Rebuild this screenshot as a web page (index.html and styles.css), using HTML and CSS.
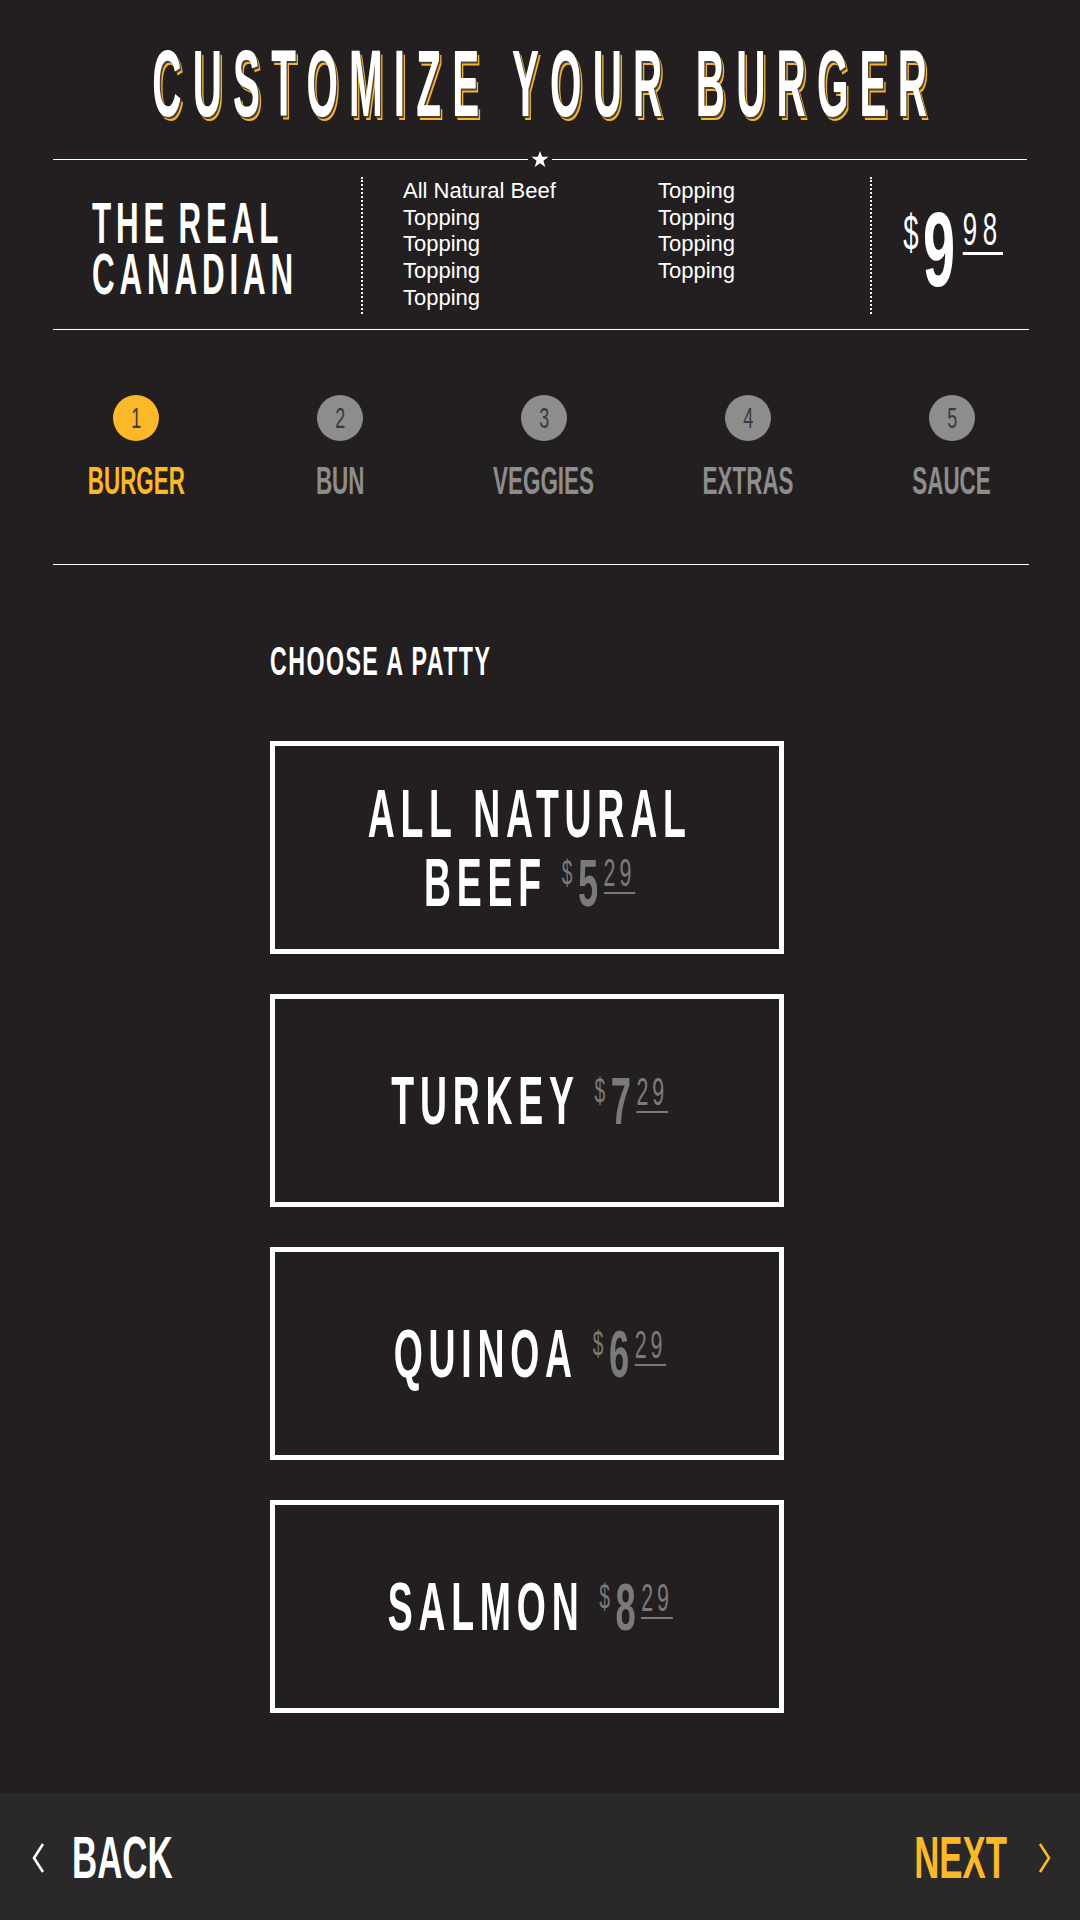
FILE: index.html
```html
<!DOCTYPE html>
<html lang="en">
<head>
    <meta charset="UTF-8">
    <title>Customize Your Burger</title>
    <link rel="stylesheet" href="styles.css">
</head>
<body>
    <header class="top">
        <h1 class="title"><span>CUSTOMIZE YOUR BURGER</span></h1>
        <div class="rule">
            <span class="rule-line"></span>
            <svg class="star" viewBox="0 0 20 20" width="18" height="18"><polygon points="10,1 12.4,7.6 19.5,7.6 13.8,11.9 15.9,18.8 10,14.7 4.1,18.8 6.2,11.9 0.5,7.6 7.6,7.6" fill="#fff"/></svg>
            <span class="rule-line"></span>
        </div>
        <section class="summary">
            <div class="summary-name"><span>THE REAL</span><span>CANADIAN</span></div>
            <div class="summary-sep"></div>
            <ul class="toppings">
                <li>All Natural Beef</li>
                <li>Topping</li>
                <li>Topping</li>
                <li>Topping</li>
                <li>Topping</li>
                <li>Topping</li>
                <li>Topping</li>
                <li>Topping</li>
                <li>Topping</li>
            </ul>
            <div class="summary-sep"></div>
            <div class="summary-price"><span class="cost-sym">$</span><span class="cost-whole">9</span><span class="cost-cents">98</span></div>
        </section>
    </header>

    <nav class="steps">
        <div class="step is-active"><div class="step-num"><span>1</span></div><div class="step-label"><span>BURGER</span></div></div>
        <div class="step"><div class="step-num"><span>2</span></div><div class="step-label"><span>BUN</span></div></div>
        <div class="step"><div class="step-num"><span>3</span></div><div class="step-label"><span>VEGGIES</span></div></div>
        <div class="step"><div class="step-num"><span>4</span></div><div class="step-label"><span>EXTRAS</span></div></div>
        <div class="step"><div class="step-num"><span>5</span></div><div class="step-label"><span>SAUCE</span></div></div>
    </nav>

    <main class="patty">
        <h2 class="patty-title"><span>CHOOSE A PATTY</span></h2>
        <div class="patty-list">
            <button class="patty-option"><span class="patty-name">ALL NATURAL<br>BEEF<span class="patty-price"><span class="cost-sym">$</span><span class="cost-whole">5</span><span class="cost-cents">29</span></span></span></button>
            <button class="patty-option"><span class="patty-name">TURKEY<span class="patty-price"><span class="cost-sym">$</span><span class="cost-whole">7</span><span class="cost-cents">29</span></span></span></button>
            <button class="patty-option"><span class="patty-name">QUINOA<span class="patty-price"><span class="cost-sym">$</span><span class="cost-whole">6</span><span class="cost-cents">29</span></span></span></button>
            <button class="patty-option"><span class="patty-name">SALMON<span class="patty-price"><span class="cost-sym">$</span><span class="cost-whole">8</span><span class="cost-cents">29</span></span></span></button>
        </div>
    </main>

    <footer class="bar">
        <a class="bar-link back" href="#">
            <svg class="chev" viewBox="0 0 14 30" width="14" height="30"><polyline points="12,1 3,15 12,29" fill="none" stroke="#fff" stroke-width="2.6"/></svg>
            <span class="bar-text">BACK</span>
        </a>
        <a class="bar-link next" href="#">
            <span class="bar-text">NEXT</span>
            <svg class="chev" viewBox="0 0 14 30" width="14" height="30"><polyline points="2,1 11,15 2,29" fill="none" stroke="#fbb829" stroke-width="2.6"/></svg>
        </a>
    </footer>
</body>
</html>
```

FILE: styles.css
```css
*{
    box-sizing: border-box;
}
body{
    margin: 0;
    min-height: 1920px;
    display: flex;
    flex-direction: column;
    background-color: #231f20;
    color: #fff;
    font-family: "Liberation Sans", Arial, sans-serif;
}

/* header */
.title{
    margin: 37px 0 0;
    display: flex;
    justify-content: center;
    font-size: 94px;
    line-height: 94px;
    font-weight: 700;
}
.title span{
    display: inline-block;
    white-space: nowrap;
    letter-spacing: 26px;
    padding-left: 26px;
    transform: scaleX(.43);
    text-shadow: 3px 2px 0 #4d4232, 6px 4px 0 #f6b32b;
}
.rule{
    margin: 20px 53px 0;
    height: 16px;
    display: flex;
    align-items: center;
    gap: 3px;
}
.rule-line{
    flex: 1;
    height: 1px;
    background-color: #fff;
}
.star{
    display: block;
}
.summary{
    margin: 0 51px 0 53px;
    height: 163px;
    padding: 10px 0 15px;
    display: flex;
    border-bottom: 1px solid #fff;
}
.summary-name{
    flex-shrink: 0;
    width: 308px;
    padding: 20px 0 0 39px;
    display: flex;
    flex-direction: column;
    align-items: flex-start;
    font-size: 58px;
    line-height: 51px;
    font-weight: 700;
}
.summary-name span{
    display: inline-block;
    white-space: nowrap;
    letter-spacing: 9px;
    word-spacing: -8px;
    transform: scaleX(.54);
    transform-origin: left center;
}
.summary-sep{
    flex-shrink: 0;
    border-left: 2px dotted #fff;
}
.toppings{
    flex-shrink: 0;
    width: 507px;
    margin: 0;
    padding: 1px 0 0 40px;
    list-style: none;
    display: grid;
    grid-template-columns: 255px auto;
    grid-template-rows: repeat(5, 26.67px);
    grid-auto-flow: column;
    font-size: 22px;
    line-height: 26.67px;
}
.summary-price{
    flex-shrink: 0;
    padding: 20px 0 0 57px;
    display: flex;
    align-items: flex-start;
    transform: scaleX(.55);
    transform-origin: left top;
    line-height: 1;
}
.summary-price .cost-sym{
    font-size: 50px;
    margin-top: 11px;
}
.summary-price .cost-whole{
    font-size: 105px;
    font-weight: 700;
    margin-left: 8px;
}
.summary-price .cost-cents{
    font-size: 47px;
    margin: 8px 0 0 14px;
    letter-spacing: 10px;
    border-bottom: 3px solid #fff;
}

/* steps */
.steps{
    padding: 65px 0 64px 34px;
    display: grid;
    grid-template-columns: repeat(5, 204px);
    position: relative;
}
.steps::after{
    content: "";
    position: absolute;
    left: 53px;
    right: 51px;
    bottom: -1px;
    height: 1px;
    background-color: #fff;
}
.step{
    display: flex;
    flex-direction: column;
    align-items: center;
    color: #8e8d8e;
}
.step-num{
    width: 46px;
    height: 46px;
    border-radius: 50%;
    background-color: #8e8d8e;
    color: #3a3a3a;
    text-align: center;
    font-size: 30px;
    line-height: 46px;
}
.step-num span{
    display: inline-block;
    transform: scaleX(.6);
}
.step-label{
    margin-top: 21px;
    font-size: 38px;
    line-height: 38px;
    font-weight: 700;
}
.step-label span{
    display: inline-block;
    transform: scaleX(.59);
}
.is-active{
    color: #fbb829;
}
.is-active .step-num{
    background-color: #fbb829;
}

/* patties */
.patty{
    flex: 1;
    padding: 77px 0 0 270px;
}
.patty-title{
    margin: 0;
    font-size: 40px;
    line-height: 40px;
    font-weight: 700;
}
.patty-title span{
    display: inline-block;
    white-space: nowrap;
    letter-spacing: 2.5px;
    transform: scaleX(.58);
    transform-origin: left center;
}
.patty-list{
    margin-top: 60px;
    width: 514px;
    display: flex;
    flex-direction: column;
    gap: 40px;
}
.patty-option{
    height: 213px;
    padding: 0;
    border: 5px solid #fff;
    background: transparent;
    color: #fff;
    font-family: inherit;
    display: flex;
    align-items: center;
    justify-content: center;
}
.patty-name{
    display: inline-block;
    white-space: nowrap;
    text-align: center;
    font-size: 68px;
    line-height: 69px;
    font-weight: 700;
    letter-spacing: 10.5px;
    padding-left: 10.5px;
    transform: scaleX(.55);
}
.patty-price{
    display: inline-flex;
    align-items: flex-start;
    vertical-align: top;
    margin-left: 27px;
    letter-spacing: 0;
    line-height: 1;
    color: #7b7a7a;
}
.patty-price .cost-sym{
    font-size: 35px;
    font-weight: 400;
    margin-top: 7px;
}
.patty-price .cost-whole{
    font-size: 66px;
    margin: 2px 0 0 10px;
}
.patty-price .cost-cents{
    font-size: 39px;
    font-weight: 400;
    letter-spacing: 7px;
    margin: 5.5px 0 0 10px;
    border-bottom: 2px solid #7b7a7a;
}

/* bottom bar */
.bar{
    height: 126px;
    padding: 0 28px 0 31px;
    display: flex;
    align-items: center;
    justify-content: space-between;
    background-color: #2a2829;
    border-top: 1px solid #302d2e;
}
.bar-link{
    display: flex;
    align-items: center;
    text-decoration: none;
    color: #fff;
    font-size: 60px;
    line-height: 60px;
    font-weight: 700;
}
.bar-text{
    display: inline-block;
    transform: scaleX(.58);
}
.back .bar-text{
    margin-left: 27px;
    transform-origin: left center;
}
.next{
    color: #fbb829;
}
.next .bar-text{
    margin-right: 31px;
    transform-origin: right center;
}
.chev{
    display: block;
}
```
